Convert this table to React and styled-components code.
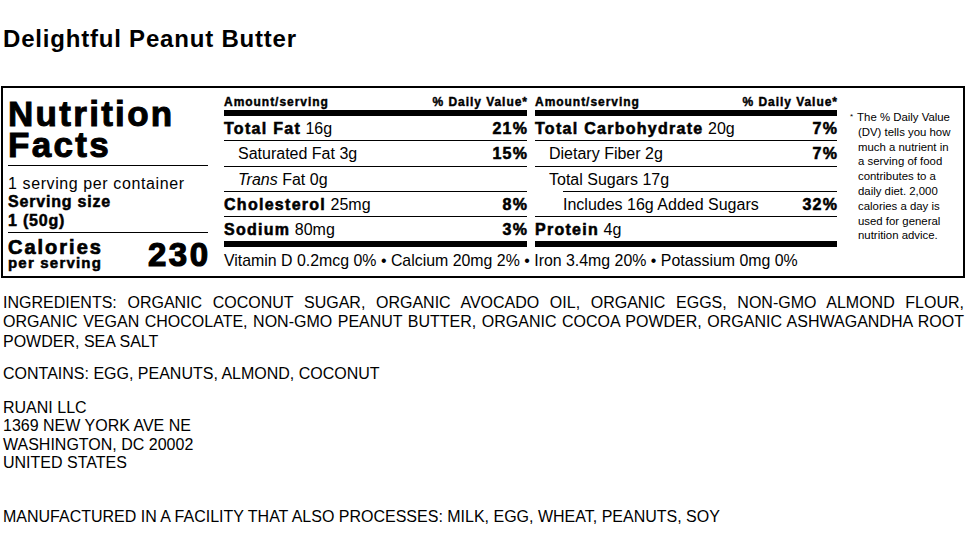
import React from 'react';
import styled, { createGlobalStyle } from 'styled-components';

const GlobalStyle = createGlobalStyle`
  html, body {
    margin: 0;
    padding: 0;
    background: #fff;
  }
  body {
    font-family: 'Liberation Sans', Arial, Helvetica, sans-serif;
    color: #000;
  }
`;

const Page = styled.div`
  width: 968px;
  box-sizing: border-box;
  padding: 25px 0 0 1px;
`;

const Title = styled.h2`
  margin: 0 0 0 2px;
  font-size: 24px;
  line-height: 28px;
  font-weight: 700;
  letter-spacing: 0.8px;
`;

const Label = styled.div`
  margin-top: 33px;
  width: 964px;
  box-sizing: border-box;
  border: 2px solid #000;
  display: flex;
  padding: 0 5px;
`;

/* heavy "Helvetica Black" look */
const Heavy = styled.span`
  font-weight: 700;
  letter-spacing: 0.08em;
  -webkit-text-stroke: 0.035em #000;
`;

const FactsCol = styled.div`
  flex: 0 0 200px;
  margin-right: 16px;
  padding-top: 10px;
  display: flex;
  flex-direction: column;
`;

const BigTitle = styled.h1`
  margin: 0;
  font-size: 35px;
  line-height: 31px;
  font-weight: 700;
  letter-spacing: 2.3px;
  -webkit-text-stroke: 1px #000;
  padding-bottom: 5px;
  border-bottom: 1.3px solid #000;
`;

const Serving = styled.div`
  padding: 9px 0 2.5px;
  font-size: 16px;
  line-height: 18.3px;
  border-bottom: 1.3px solid #000;
`;

const ServingCount = styled.div`
  letter-spacing: 0.6px;
`;

const ServingSize = styled.div`
  font-weight: 700;
  letter-spacing: 0.8px;
  -webkit-text-stroke: 0.5px #000;
`;

const CaloriesRow = styled.div`
  display: flex;
  justify-content: space-between;
  align-items: flex-end;
  padding-top: 4.7px;
`;

const CaloriesLabel = styled.div`
  display: flex;
  flex-direction: column;
`;

const CalTitle = styled(Heavy)`
  font-size: 20px;
  line-height: 18px;
  letter-spacing: 0.1em;
`;

const CalSub = styled(Heavy)`
  font-size: 15px;
  line-height: 14px;
`;

const CalValue = styled(Heavy)`
  font-size: 33px;
  line-height: 28px;
  letter-spacing: 2.5px;
  margin: 0 -2.5px 1px 0;
  -webkit-text-stroke: 1.2px #000;
`;

const NutrientArea = styled.div`
  flex: 0 0 613px;
  display: flex;
  flex-direction: column;
`;

const Columns = styled.div`
  display: grid;
  grid-template-columns: 303px 302px;
  column-gap: 8px;
`;

const Column = styled.div`
  display: flex;
  flex-direction: column;
`;

const Header = styled.div`
  height: 22px;
  box-sizing: border-box;
  padding-bottom: 1px;
  display: flex;
  align-items: flex-end;
  justify-content: space-between;
  font-size: 12px;
  line-height: 14px;
`;

const Bar = styled.div`
  height: 6px;
  background: #000;
`;

const Row = styled.div`
  display: flex;
  justify-content: space-between;
  align-items: center;
  font-size: 16px;
  line-height: 22.3px;
  padding-top: 2px;
  padding-left: ${p => p.$pad || 0}px;
  margin-left: ${p => p.$shift || 0}px;
  border-top: 1px solid #000;
  &:first-of-type {
    border-top: none;
  }
`;

const Pct = styled(Heavy)`
  margin-right: -0.08em;
`;

const Vitamins = styled.div`
  margin-top: 4.7px;
  padding-bottom: 5.4px;
  font-size: 15.9px;
  line-height: 18.4px;
`;

const Footnote = styled.div`
  flex: 0 0 100px;
  margin-left: 13px;
  padding: 22px 0 0 8px;
  text-indent: -8px;
  font-size: 11.4px;
  line-height: 14.8px;
  white-space: nowrap;
`;

const Star = styled.span`
  font-size: 8px;
  vertical-align: 2px;
  margin-right: 1px;
`;

const Body = styled.div`
  margin-left: 2px;
  font-size: 16px;
`;

const Ingredients = styled.p`
  margin: 15px 0 0;
  width: 961px;
  line-height: 19.5px;
  text-align: justify;
`;

const Block = styled.p`
  margin: ${p => p.$top}px 0 0;
  line-height: 18.4px;
`;

const left = [
  { name: 'Total Fat', amt: '16g', pct: '21%', bold: true },
  { name: 'Saturated Fat', amt: '3g', pct: '15%', pad: 14 },
  { name: 'Trans', italic: true, amt: 'Fat 0g', pad: 14 },
  { name: 'Cholesterol', amt: '25mg', pct: '8%', bold: true },
  { name: 'Sodium', amt: '80mg', pct: '3%', bold: true },
];

const right = [
  { name: 'Total Carbohydrate', amt: '20g', pct: '7%', bold: true },
  { name: 'Dietary Fiber', amt: '2g', pct: '7%', pad: 14 },
  { name: 'Total Sugars', amt: '17g', pad: 14 },
  { name: 'Includes', amt: '16g Added Sugars', pct: '32%', shift: 28 },
  { name: 'Protein', amt: '4g', bold: true },
];

const NutrientRow = ({ r }) => (
  <Row $pad={r.pad} $shift={r.shift}>
    <span>
      {r.bold ? <Heavy>{r.name}</Heavy> : r.italic ? <i>{r.name}</i> : r.name} {r.amt}
    </span>
    {r.pct && <Pct>{r.pct}</Pct>}
  </Row>
);

const NutrientColumn = ({ rows }) => (
  <Column>
    <Header>
      <Heavy>Amount/serving</Heavy>
      <Pct>% Daily Value*</Pct>
    </Header>
    <Bar />
    <div>
      {rows.map(r => <NutrientRow key={r.name} r={r} />)}
    </div>
    <Bar />
  </Column>
);

const App = () => {
  return (
    <>
      <GlobalStyle />
      <Page>
        <Title>Delightful Peanut Butter</Title>
        <Label>
          <FactsCol>
            <BigTitle>Nutrition<br />Facts</BigTitle>
            <Serving>
              <ServingCount>1 serving per container</ServingCount>
              <ServingSize>Serving size</ServingSize>
              <ServingSize>1 (50g)</ServingSize>
            </Serving>
            <CaloriesRow>
              <CaloriesLabel>
                <CalTitle>Calories</CalTitle>
                <CalSub>per serving</CalSub>
              </CaloriesLabel>
              <CalValue>230</CalValue>
            </CaloriesRow>
          </FactsCol>
          <NutrientArea>
            <Columns>
              <NutrientColumn rows={left} />
              <NutrientColumn rows={right} />
            </Columns>
            <Vitamins>
              Vitamin D 0.2mcg 0% • Calcium 20mg 2% • Iron 3.4mg 20% • Potassium 0mg 0%
            </Vitamins>
          </NutrientArea>
          <Footnote>
            <Star>*</Star> The % Daily Value<br />
            (DV) tells you how<br />
            much a nutrient in<br />
            a serving of food<br />
            contributes to a<br />
            daily diet. 2,000<br />
            calories a day is<br />
            used for general<br />
            nutrition advice.
          </Footnote>
        </Label>
        <Body>
          <Ingredients>
            INGREDIENTS: ORGANIC COCONUT SUGAR, ORGANIC AVOCADO OIL, ORGANIC EGGS, NON-GMO ALMOND FLOUR, ORGANIC VEGAN CHOCOLATE, NON-GMO PEANUT BUTTER, ORGANIC COCOA POWDER, ORGANIC ASHWAGANDHA ROOT POWDER, SEA SALT
          </Ingredients>
          <Block $top={13.3}>CONTAINS: EGG, PEANUTS, ALMOND, COCONUT</Block>
          <Block $top={15.6}>
            RUANI LLC<br />
            1369 NEW YORK AVE NE<br />
            WASHINGTON, DC 20002<br />
            UNITED STATES
          </Block>
          <Block $top={36}>
            MANUFACTURED IN A FACILITY THAT ALSO PROCESSES: MILK, EGG, WHEAT, PEANUTS, SOY
          </Block>
        </Body>
      </Page>
    </>
  );
};

export default App;
